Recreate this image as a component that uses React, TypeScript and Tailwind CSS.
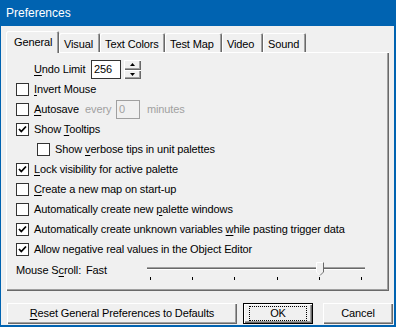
import React from "react";

const raised =
  "bg-[#f0f0f0] shadow-[inset_1px_1px_0_#ffffff,inset_-1px_-1px_0_#696969,inset_-2px_-2px_0_#a0a0a0]";
const tabEdge =
  "bg-[#f0f0f0] shadow-[inset_1px_1px_0_#ffffff,inset_-1px_0_0_#696969,inset_-2px_0_0_#a0a0a0]";

function Check({ checked }: { checked?: boolean }) {
  return (
    <span className="w-[13px] h-[13px] shrink-0 border border-[#333333] bg-white flex items-center justify-center">
      {checked && (
        <svg width="11" height="11" viewBox="0 0 11 11">
          <path d="M2 5 L4.3 7.5 L9 2.5" fill="none" stroke="#000" strokeWidth="1.8" />
        </svg>
      )}
    </span>
  );
}

function U({ children }: { children: React.ReactNode }) {
  return <span className="underline underline-offset-[2px]">{children}</span>;
}

function Row({
  checked,
  indent = 0,
  children,
}: {
  checked?: boolean;
  indent?: number;
  children: React.ReactNode;
}) {
  return (
    <div className="h-[20px] flex items-center gap-[5px]" style={{ paddingLeft: indent }}>
      <Check checked={checked} />
      <span className="whitespace-nowrap">{children}</span>
    </div>
  );
}

const tabs = [
  { label: "General", w: 53 },
  { label: "Visual", w: 41 },
  { label: "Text Colors", w: 65 },
  { label: "Test Map", w: 57 },
  { label: "Video", w: 41 },
  { label: "Sound", w: 43 },
];

export default function App() {
  return (
    <div
      className="w-[396px] h-[327px] bg-[#0063b1] flex flex-col pl-[1px] pr-[2px] pb-[2px] text-[11px] text-black tracking-[-0.12px]"
      style={{ fontFamily: '"Liberation Sans", Arial, sans-serif' }}
    >
      <div className="h-[26px] shrink-0 flex items-center pl-[5px] text-white text-[12px] tracking-normal">
        Preferences
      </div>

      <div className="flex-1 bg-[#f0f0f0] pl-[5px] pt-[5px] flex flex-col">
        <div className="h-[21px] flex items-end">
          {tabs.map((t, i) =>
            i === 0 ? (
              <div
                key={t.label}
                className={`relative z-10 h-[22px] -mb-[1px] rounded-t-[2px] pt-[3px] pl-[8px] ${tabEdge}`}
                style={{ width: t.w }}
              >
                {t.label}
              </div>
            ) : (
              <div
                key={t.label}
                className={`h-[19px] rounded-t-[2px] pt-[3px] pl-[5px] whitespace-nowrap ${tabEdge}`}
                style={{ width: t.w }}
              >
                {t.label}
              </div>
            ),
          )}
        </div>

        <div className={`w-[383px] h-[239px] pt-[7px] pl-[10px] ${raised}`}>
          <div className="h-[20px] flex items-center pl-[18px]">
            <span className="w-[57px]">
              <U>U</U>ndo Limit
            </span>
            <span className="w-[30px] h-[19px] border border-[#333333] bg-white pl-[2px] flex items-center">
              256
            </span>
            <span className="ml-[3px] w-[17px] h-[19px] flex flex-col">
              <span className={`h-[10px] flex items-center justify-center ${raised}`}>
                <svg width="5" height="3" viewBox="0 0 5 3">
                  <path d="M2.5 0 L5 3 L0 3 Z" fill="#000" />
                </svg>
              </span>
              <span className={`h-[9px] flex items-center justify-center ${raised}`}>
                <svg width="5" height="3" viewBox="0 0 5 3">
                  <path d="M0 0 L5 0 L2.5 3 Z" fill="#000" />
                </svg>
              </span>
            </span>
          </div>

          <Row>
            <U>I</U>nvert Mouse
          </Row>

          <div className="h-[20px] flex items-center">
            <Check />
            <span className="ml-[5px] w-[51px]">
              <U>A</U>utosave
            </span>
            <span className="w-[31px] text-[#a0a0a0]">every</span>
            <span className="w-[24px] h-[19px] border border-[#a0a0a0] pl-[2px] text-[#a0a0a0] flex items-center">
              0
            </span>
            <span className="ml-[7px] text-[#a0a0a0]">minutes</span>
          </div>

          <Row checked>
            Show <U>T</U>ooltips
          </Row>
          <Row indent={21}>
            Show <U>v</U>erbose tips in unit palettes
          </Row>
          <Row checked>
            <U>L</U>ock visibility for active palette
          </Row>
          <Row>
            <U>C</U>reate a new map on start-up
          </Row>
          <Row>
            Automatically create new <U>p</U>alette windows
          </Row>
          <Row checked>
            Automatically create unknown variables <U>w</U>hile pasting trigger data
          </Row>
          <Row checked>Allow negative real values in the Object Editor</Row>

          <div className="h-[22px] flex items-center">
            <span className="w-[70px]">
              Mouse S<U>c</U>roll:
            </span>
            <span className="w-[61px]">Fast</span>
            <div className="relative w-[218px] h-[22px]">
              <div className="absolute left-0 right-0 top-[8px] h-[3px] border-t border-[#a0a0a0] bg-[#696969] border-b border-b-white" />
              <div className="absolute left-[3px] right-[3px] top-[18px] flex justify-between">
                {[0, 1, 2, 3, 4, 5].map((k) => (
                  <span key={k} className="w-[1px] h-[3px] bg-black" />
                ))}
              </div>
              <svg className="absolute left-[169px] top-[3px]" width="8" height="14" viewBox="0 0 8 14">
                <path d="M0.5 0.5 H7.5 V10 L4 13.5 L0.5 10 Z" fill="#f0f0f0" stroke="#ffffff" />
                <path d="M7.5 0.5 V10 L4 13.5" fill="none" stroke="#696969" />
              </svg>
            </div>
          </div>
        </div>

        <div className="mt-[12px] flex items-center">
          <div className={`ml-[1px] w-[230px] h-[21px] flex items-center justify-center ${raised}`}>
            <span>
              <U>R</U>eset General Preferences to Defaults
            </span>
          </div>
          <div className="ml-[6px] w-[70px] h-[21px] border border-black">
            <div className={`w-full h-full flex items-center justify-center ${raised}`}>
              <span className="w-[58px] h-[15px] border border-dotted border-black flex items-center justify-center">
                OK
              </span>
            </div>
          </div>
          <div className={`ml-[10px] w-[70px] h-[21px] flex items-center justify-center ${raised}`}>
            Cancel
          </div>
        </div>
      </div>
    </div>
  );
}
